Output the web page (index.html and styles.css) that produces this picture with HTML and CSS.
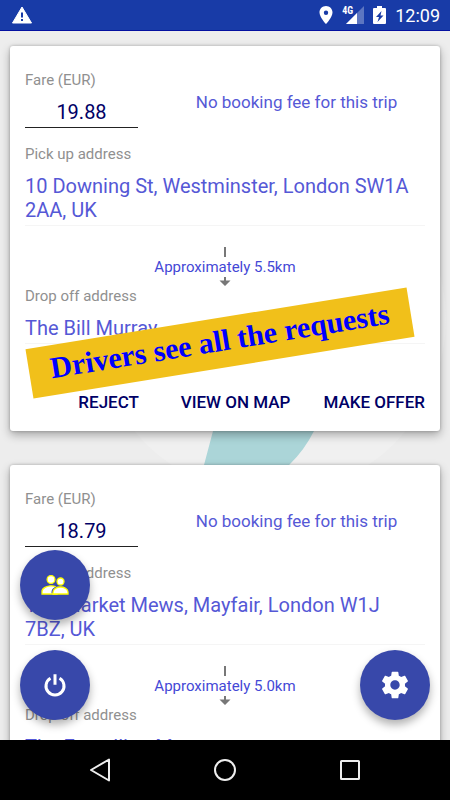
FILE: index.html
```html
<!DOCTYPE html>
<html lang="en">
<head>
<meta charset="utf-8">
<meta name="viewport" content="width=device-width, initial-scale=1">
<title>Trip requests</title>
<link rel="stylesheet" href="styles.css">
</head>
<body>
<header class="status">
  <svg class="status-warning" width="20" height="18" viewBox="0 0 20 18" aria-hidden="true"><path d="M10 1 19.5 17H.5Z" fill="#fff" stroke="#fff" stroke-linejoin="round"/><path d="M10 6.500V11.500M10 13V15" stroke="#183ba7" stroke-width="2"/></svg>
  <div class="status-right">
    <svg width="14" height="20" viewBox="0 0 14 20" aria-hidden="true"><path fill="#fff" fill-rule="evenodd" d="M7 1C3.400 1 .5 3.800.5 7.400.5 12 7 19 7 19s6.500-7 6.500-11.600C13.500 3.800 10.600 1 7 1Zm0 4.500a2.200 2.200 0 1 1 0 4.400 2.200 2.200 0 0 1 0-4.400Z"/></svg>
    <span class="signal"><span class="signal-label">4G</span><svg width="18" height="18" viewBox="0 0 18 18" aria-hidden="true"><path d="M18 0V18H0Z" fill="#fff" opacity=".3"/><path d="M11 7V18H0Z" fill="#fff"/></svg></span>
    <svg width="13" height="20" viewBox="0 0 13 20" aria-hidden="true"><path fill="#fff" d="M4 1H9V3H12Q13 3 13 4V18Q13 19 12 19H1Q0 19 0 18V4Q0 3 1 3H4Z"/><path d="M8.500 6 3 12H6L4.500 17 10.500 10.500H7.500Z" fill="#183ba7"/></svg>
    <span class="clock">12:09</span>
  </div>
</header>
<main class="screen">
  <svg class="backdrop" viewBox="0 0 450 709" aria-hidden="true"><circle cx="270" cy="288" r="176" fill="#f0f0f0"/><path d="M225 350 213 400 204 434 196 460H250Q294 440 314 400L330 350Z" fill="#abd5d8"/></svg>
  <article class="card">
    <div class="fare-row">
      <div class="fare"><label class="label" for="fare1">Fare (EUR)</label><input class="fare-input" id="fare1" type="text" value="19.88"></div>
      <p class="fee">No booking fee for this trip</p>
    </div>
    <h2 class="label pickup">Pick up address</h2>
    <p class="address">10 Downing St, Westminster, London SW1A 2AA, UK</p>
    <div class="distance"><svg width="12" height="10" viewBox="0 0 12 10" aria-hidden="true"><path d="M6 0V10" stroke="#777" stroke-width="2"/></svg><span>Approximately 5.5km</span><svg width="12" height="9" viewBox="0 0 12 9" aria-hidden="true"><path d="M5 0H7V3.500H11.500L6 9 .5 3.500H5Z" fill="#777"/></svg></div>
    <h2 class="label">Drop off address</h2>
    <p class="address">The Bill Murray</p>
    <div class="actions"><button class="action" type="button">REJECT</button><button class="action" type="button">VIEW ON MAP</button><button class="action" type="button">MAKE OFFER</button></div>
  </article>
  <article class="card">
    <div class="fare-row">
      <div class="fare"><label class="label" for="fare2">Fare (EUR)</label><input class="fare-input" id="fare2" type="text" value="18.79"></div>
      <p class="fee">No booking fee for this trip</p>
    </div>
    <h2 class="label pickup">Pick up address</h2>
    <p class="address">17a Market Mews, Mayfair, London W1J 7BZ, UK</p>
    <div class="distance"><svg width="12" height="10" viewBox="0 0 12 10" aria-hidden="true"><path d="M6 0V10" stroke="#777" stroke-width="2"/></svg><span>Approximately 5.0km</span><svg width="12" height="9" viewBox="0 0 12 9" aria-hidden="true"><path d="M5 0H7V3.500H11.500L6 9 .5 3.500H5Z" fill="#777"/></svg></div>
    <h2 class="label">Drop off address</h2>
    <p class="address">The Escarllion M</p>
  </article>
  <p class="banner">Drivers see all the requests</p>
  <button class="fab fab-people" type="button" aria-label="Passengers"><svg width="28" height="22" viewBox="0 0 28 22" aria-hidden="true"><g fill="#fff" stroke="#ff0" stroke-width="1.300"><circle cx="10" cy="5.500" r="3.900"/><circle cx="19.500" cy="7.500" r="3.500"/><path d="M1 20V17.500C1 14 6 11.800 10 11.800S16 13.500 16 15V20Z"/><path stroke="#3848aa" stroke-width="3" d="M12 19.300V18C12 15 16 13.200 19.500 13.200"/><path d="M12 20V18C12 15 16 13 19.500 13S27 15 27 18V20Z"/></g></svg></button>
  <button class="fab fab-power" type="button" aria-label="Power"><svg width="24" height="24" viewBox="0 0 24 24" aria-hidden="true"><path d="M7.500 5.500A9 9 0 1 0 16.500 5.500M12 1.500V12" transform="translate(0 -.3)" fill="none" stroke="#fff" stroke-width="3"/></svg></button>
  <button class="fab fab-settings" type="button" aria-label="Settings"><svg width="32" height="32" viewBox="0 0 24 24" aria-hidden="true"><path fill="#fff" d="M19.430 12.980c.04-.32.07-.64.07-.98s-.03-.66-.07-.98l2.110-1.650c.19-.15.240-.42.120-.64l-2-3.460c-.12-.22-.39-.3-.61-.22l-2.490 1c-.52-.4-1.080-.73-1.690-.98l-.38-2.650C14.460 2.180 14.250 2 14 2h-4c-.25 0-.46.180-.49.420l-.38 2.650c-.61.250-1.170.590-1.690.980l-2.490-1c-.23-.09-.49 0-.61.220l-2 3.460c-.13.220-.07.490.12.640l2.110 1.650c-.04.320-.07.650-.07.980s.03.660.07.980l-2.110 1.650c-.19.150-.24.420-.12.640l2 3.460c.12.220.39.300.61.220l2.490-1c.52.400 1.080.730 1.690.980l.38 2.650c.03.240.24.420.49.420h4c.25 0 .46-.18.490-.42l.38-2.650c.61-.25 1.170-.59 1.690-.98l2.490 1c.23.090.49 0 .61-.22l2-3.460c.12-.22.070-.49-.12-.64l-2.110-1.650ZM12 15.500c-1.930 0-3.500-1.570-3.500-3.500s1.570-3.500 3.500-3.500 3.500 1.570 3.500 3.500-1.570 3.500-3.500 3.500Z"/></svg></button>
</main>
<nav class="navbar">
  <button class="nav-button" type="button" aria-label="Back"><svg width="24" height="26" viewBox="0 0 24 26" aria-hidden="true"><path d="M21 2.500V23.500L3 13Z" fill="none" stroke="#eee" stroke-width="2" stroke-linejoin="round"/></svg></button>
  <button class="nav-button" type="button" aria-label="Home"><svg width="24" height="24" viewBox="0 0 24 24" aria-hidden="true"><circle cx="12" cy="12" r="10" fill="none" stroke="#eee" stroke-width="2"/></svg></button>
  <button class="nav-button" type="button" aria-label="Recent apps"><svg width="24" height="24" viewBox="0 0 24 24" aria-hidden="true"><rect x="3" y="3" width="18" height="18" rx=".5" fill="none" stroke="#eee" stroke-width="2"/></svg></button>
</nav>
</body>
</html>
```
FILE: styles.css
```css
* {
  box-sizing: border-box;
}

body {
  margin: 0;
  height: 100vh;
  display: flex;
  flex-direction: column;
  overflow: hidden;
  background: #ededed;
  font-family: Roboto, "Liberation Sans", sans-serif;
}

h2,
p {
  margin: 0;
  font-weight: 400;
}

svg {
  display: block;
}

button {
  padding: 0;
  border: 0;
  background: none;
  font-family: inherit;
}

.status {
  flex: none;
  display: flex;
  align-items: center;
  justify-content: space-between;
  height: 31px;
  padding: 0 10px 0 12px;
  border-bottom: 1px solid #0410a0;
  background: #183ba7;
  color: #fff;
}

.status-right {
  display: flex;
  align-items: center;
  gap: 9px;
}

.signal {
  position: relative;
  padding-left: 4px;
}

.signal-label {
  position: absolute;
  left: 0;
  top: 0;
  font: 700 10px/10px "Roboto Condensed", Roboto, sans-serif;
}

.clock {
  font-size: 18px;
  font-weight: 400;
}

.screen {
  flex: 1;
  min-height: 0;
  position: relative;
  overflow: hidden;
  display: flex;
  flex-direction: column;
  gap: 34px;
  padding: 15px 10px 0;
}

.backdrop {
  position: absolute;
  left: 0;
  top: 0;
  width: 100%;
}

.card {
  position: relative;
  flex: none;
  padding: 24px 15px 13px;
  border-radius: 3px;
  background: #fff;
  box-shadow: 0 4px 10px rgba(0, 0, 0, 0.3), 0 0 3px rgba(0, 0, 0, 0.25);
}

.fare-row {
  display: flex;
}

.fare {
  width: 113px;
}

.label {
  display: block;
  color: #909090;
  font-size: 15px;
  line-height: 20px;
}

.fare-input {
  display: block;
  width: 100%;
  height: 38px;
  padding: 6px 0 0;
  border: 0;
  border-bottom: 1px solid #222;
  background: none;
  color: #000066;
  font: 400 20px/24px Roboto, sans-serif;
  text-align: center;
}

.fee {
  flex: 1;
  padding: 20px 0 0 30px;
  color: #5558d6;
  font-size: 17px;
  line-height: 24px;
  text-align: center;
}

.pickup {
  margin-top: 16px;
}

.address {
  padding: 10px 12px 3px 0;
  border-bottom: 1px solid #f5f5f5;
  color: #5558d6;
  font-size: 20px;
  line-height: 24px;
}

.distance {
  display: flex;
  flex-direction: column;
  align-items: center;
  padding: 21px 0 0;
  color: #4448d6;
  font-size: 15px;
  line-height: 20px;
}

.actions {
  display: flex;
  justify-content: flex-end;
  gap: 33px;
  padding-top: 42px;
}

.action {
  min-width: 78px;
  color: #000066;
  font-size: 17px;
  font-weight: 500;
  line-height: 32px;
}

.banner {
  position: absolute;
  left: 27px;
  right: 37px;
  top: 287px;
  height: 50px;
  transform: rotate(-9.200deg);
  background: #f1c01a;
  color: #00f;
  font: 700 30px/46px "Liberation Serif", serif;
  text-align: center;
}

.fab {
  position: absolute;
  display: flex;
  align-items: center;
  justify-content: center;
  width: 70px;
  height: 70px;
  border-radius: 50%;
  background: #3848aa;
  box-shadow: 0 5px 9px rgba(0, 0, 0, 0.3);
}

.fab-people {
  left: 20px;
  bottom: 120px;
}

.fab-power {
  left: 20px;
  bottom: 20px;
}

.fab-settings {
  right: 20px;
  bottom: 20px;
}

.navbar {
  flex: none;
  display: flex;
  align-items: center;
  justify-content: center;
  gap: 101px;
  height: 60px;
  background: #000;
}
```
